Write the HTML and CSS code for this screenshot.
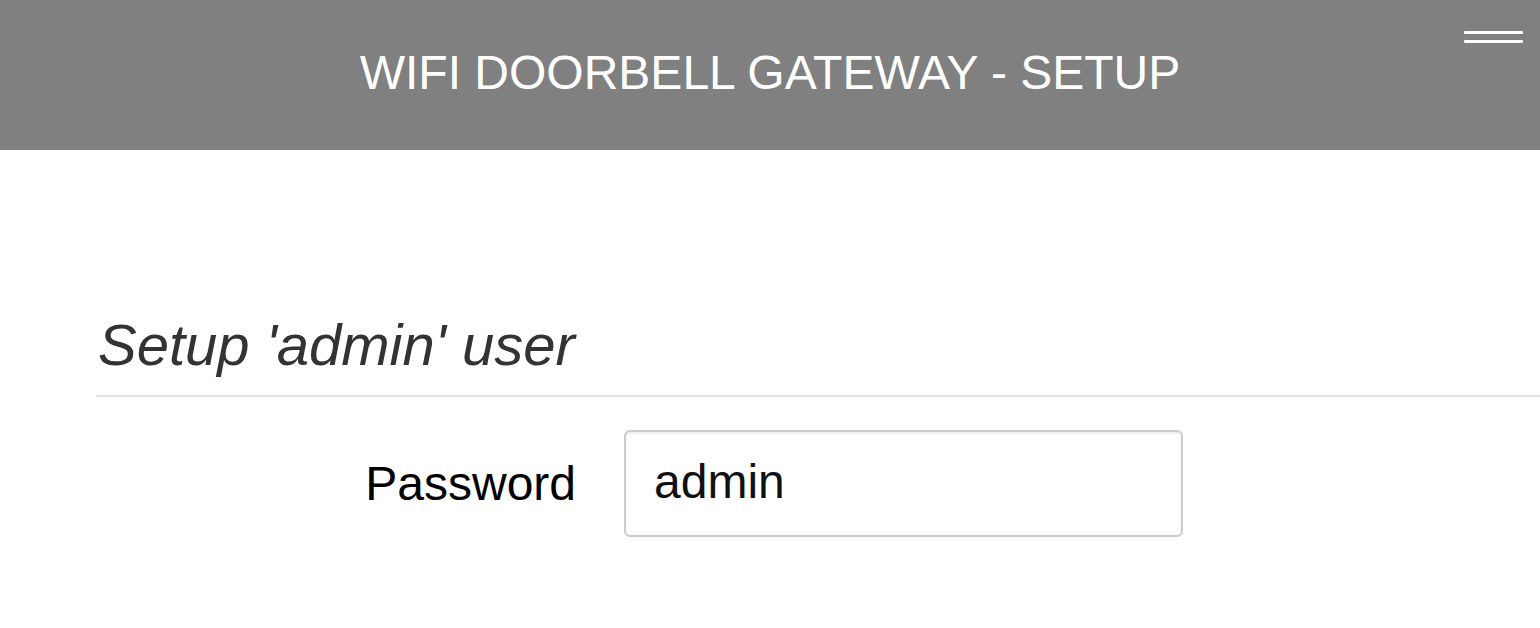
FILE: index.html
```html
<!DOCTYPE html>
<html lang="en">
<head>
<meta charset="utf-8">
<title>WiFi Doorbell Gateway - Setup</title>
<link rel="stylesheet" href="styles.css">
</head>
<body>
<header class="topbar">
  <h1 class="title">WIFI DOORBELL GATEWAY - SETUP</h1>
  <button class="menu" type="button" aria-label="Menu"><span class="bar"></span><span class="bar"></span></button>
</header>
<main class="content">
  <form class="setup">
    <fieldset class="group">
      <legend class="legend">Setup 'admin' user</legend>
      <div class="row">
        <label class="label" for="pw">Password</label>
        <input class="field" id="pw" type="text" value="admin">
      </div>
    </fieldset>
  </form>
</main>
</body>
</html>
```
FILE: styles.css
```css
html, body {
  margin: 0;
  padding: 0;
  background: #fff;
  font-family: "Liberation Sans", Arial, Helvetica, sans-serif;
}

.topbar {
  position: relative;
  box-sizing: border-box;
  height: 150px;
  padding-top: 46px;
  background: #808080;
  text-align: center;
}

.title {
  margin: 0;
  font-size: 48px;
  line-height: 54px;
  font-weight: normal;
  color: #fff;
}

.menu {
  position: absolute;
  top: 31px;
  right: 17px;
  display: flex;
  flex-direction: column;
  gap: 6px;
  width: 59px;
  padding: 0;
  border: 0;
  background: transparent;
}

.bar {
  display: block;
  height: 3px;
  width: 59px;
  background: #fff;
  border-radius: 1px;
}

.content {
  padding: 163px 0 0 96px;
}

.setup {
  margin: 0;
}

.group {
  margin: 0;
  padding: 0;
  border: 0;
  min-width: 0;
}

.legend {
  display: block;
  box-sizing: border-box;
  width: 100%;
  padding: 0 0 18px 2px;
  margin: 0;
  font-size: 58px;
  line-height: 64px;
  font-style: italic;
  color: #333;
  border-bottom: 2px solid #e5e5e5;
}

.row {
  display: flex;
  align-items: center;
  gap: 48px;
  margin-top: 33px;
}

.label {
  width: 480px;
  text-align: right;
  font-size: 48px;
  line-height: 54px;
  color: #000;
}

.field {
  box-sizing: border-box;
  width: 559px;
  height: 107px;
  padding: 0 26px 5px 28px;
  border: 2px solid #ccc;
  border-radius: 6px;
  box-shadow: inset 0 2px 2px rgba(0, 0, 0, 0.075);
  font-family: "Liberation Sans", Arial, Helvetica, sans-serif;
  font-size: 48px;
  color: #111;
  background: #fff;
  outline: none;
}
```
